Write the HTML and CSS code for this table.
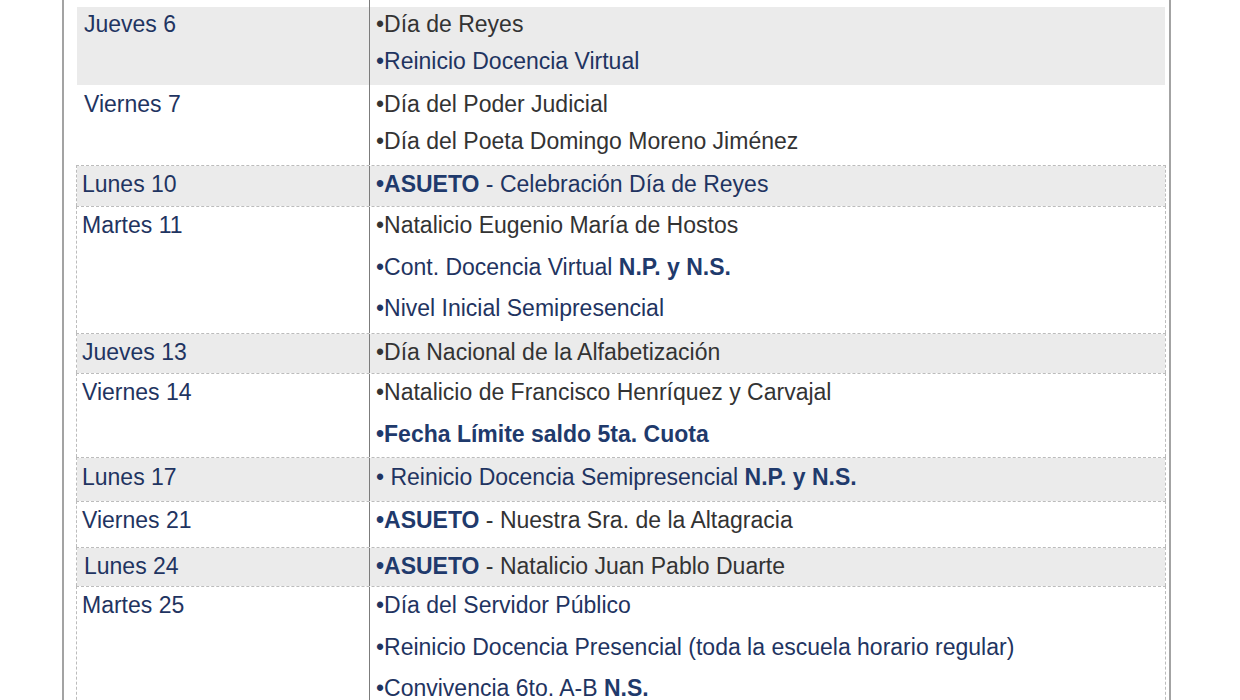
FILE: index.html
```html
<!DOCTYPE html>
<html lang="es">
<head>
<meta charset="utf-8">
<title>Calendario enero</title>
<link rel="stylesheet" href="styles.css">
</head>
<body>
<div class="frame">
  <div class="table">
    <div class="row spacer">
      <div class="day"></div>
      <div class="events"></div>
    </div>

    <div class="row shade plain r1">
      <div class="day indent">Jueves 6</div>
      <div class="events tight">
        <div class="line gray">•Día de Reyes</div>
        <div class="line navy">•Reinicio Docencia Virtual</div>
      </div>
    </div>

    <div class="row plain r2">
      <div class="day indent">Viernes 7</div>
      <div class="events tight">
        <div class="line gray">•Día del Poder Judicial</div>
        <div class="line gray">•Día del Poeta Domingo Moreno Jiménez</div>
      </div>
    </div>

    <div class="row shade dashed r3">
      <div class="day">Lunes 10</div>
      <div class="events">
        <div class="line navy"><b>•ASUETO</b> - Celebración Día de Reyes</div>
      </div>
    </div>

    <div class="row dashed r4">
      <div class="day">Martes 11</div>
      <div class="events">
        <div class="line gray">•Natalicio Eugenio María de Hostos</div>
        <div class="line navy">•Cont. Docencia Virtual <b>N.P. y N.S.</b></div>
        <div class="line navy">•Nivel Inicial Semipresencial</div>
      </div>
    </div>

    <div class="row shade dashed r5">
      <div class="day">Jueves 13</div>
      <div class="events">
        <div class="line gray">•Día Nacional de la Alfabetización</div>
      </div>
    </div>

    <div class="row dashed r6">
      <div class="day">Viernes 14</div>
      <div class="events">
        <div class="line gray">•Natalicio de Francisco Henríquez y Carvajal</div>
        <div class="line navy"><b>•Fecha Límite saldo 5ta. Cuota</b></div>
      </div>
    </div>

    <div class="row shade dashed r7">
      <div class="day">Lunes 17</div>
      <div class="events">
        <div class="line navy">• Reinicio Docencia Semipresencial <b>N.P. y N.S.</b></div>
      </div>
    </div>

    <div class="row dashed r8">
      <div class="day">Viernes 21</div>
      <div class="events">
        <div class="line gray"><b class="navyb">•ASUETO</b> - Nuestra Sra. de la Altagracia</div>
      </div>
    </div>

    <div class="row shade dashed r9">
      <div class="day indent">Lunes 24</div>
      <div class="events">
        <div class="line gray"><b class="navyb">•ASUETO</b> - Natalicio Juan Pablo Duarte</div>
      </div>
    </div>

    <div class="row dashed r10">
      <div class="day">Martes 25</div>
      <div class="events">
        <div class="line navy">•Día del Servidor Público</div>
        <div class="line navy">•Reinicio Docencia Presencial (toda la escuela horario regular)</div>
        <div class="line navy">•Convivencia 6to. A-B <b>N.S.</b></div>
      </div>
    </div>
  </div>
</div>
</body>
</html>
```
FILE: styles.css
```css
html, body {
  margin: 0;
  padding: 0;
  background: #ffffff;
}

body {
  font-family: "Liberation Sans", Arial, sans-serif;
  font-size: 23px;
  color: #1f3461;
  overflow: hidden;
}

.frame {
  box-sizing: border-box;
  margin-left: 62px;
  width: 1109px;
  height: 700px;
  border-left: 2px solid #a3a3a3;
  border-right: 2px solid #a3a3a3;
  padding: 0 3px 0 12px;
}

.table {
  display: flex;
  flex-direction: column;
  width: 1090px;
}

.row {
  display: grid;
  grid-template-columns: 292px 1fr;
  border-left: 1px solid transparent;
  border-right: 1px solid transparent;
  background-clip: padding-box;
}

.row.dashed {
  border-top: 1px dashed #bcbcbc;
  border-left: 1px dashed #bcbcbc;
  border-right: 1px dashed #bcbcbc;
}

.shade {
  background-color: #ebebeb;
}

.spacer {
  height: 7px;
}

.day {
  padding-left: 5px;
  line-height: 34px;
  color: #1f3461;
}

.day.indent {
  padding-left: 7px;
}

.events {
  border-left: 1px solid #7c7c7c;
  padding-left: 6px;
  display: flex;
  flex-direction: column;
  gap: 7.5px;
}

.events.tight {
  gap: 3px;
}

.line {
  line-height: 34px;
  height: 34px;
  white-space: nowrap;
}

.gray {
  color: #333333;
}

.navy {
  color: #1f3461;
}

b {
  font-weight: bold;
  color: #1f3a6c;
}

.navyb {
  color: #1f3a6c;
}

/* vertical placement per row */
.r1 .day, .r1 .events { padding-top: 0; padding-bottom: 7px; }
.r2 .day, .r2 .events { padding-top: 2px; padding-bottom: 7px; }
.r3 .day, .r3 .events { padding-top: 1px; padding-bottom: 5px; }
.r4 .day, .r4 .events { padding-top: 1px; padding-bottom: 8px; }
.r5 .day, .r5 .events { padding-top: 1px; padding-bottom: 4px; }
.r6 .day, .r6 .events { padding-top: 1px; padding-bottom: 6px; }
.r6 .events { gap: 8px; }
.r7 .day, .r7 .events { padding-top: 2px; padding-bottom: 7px; }
.r8 .day, .r8 .events { padding-top: 1px; padding-bottom: 10px; }
.r9 .day, .r9 .events { padding-top: 1px; padding-bottom: 3px; }
.r10 .day, .r10 .events { padding-top: 1px; padding-bottom: 20px; }
```
